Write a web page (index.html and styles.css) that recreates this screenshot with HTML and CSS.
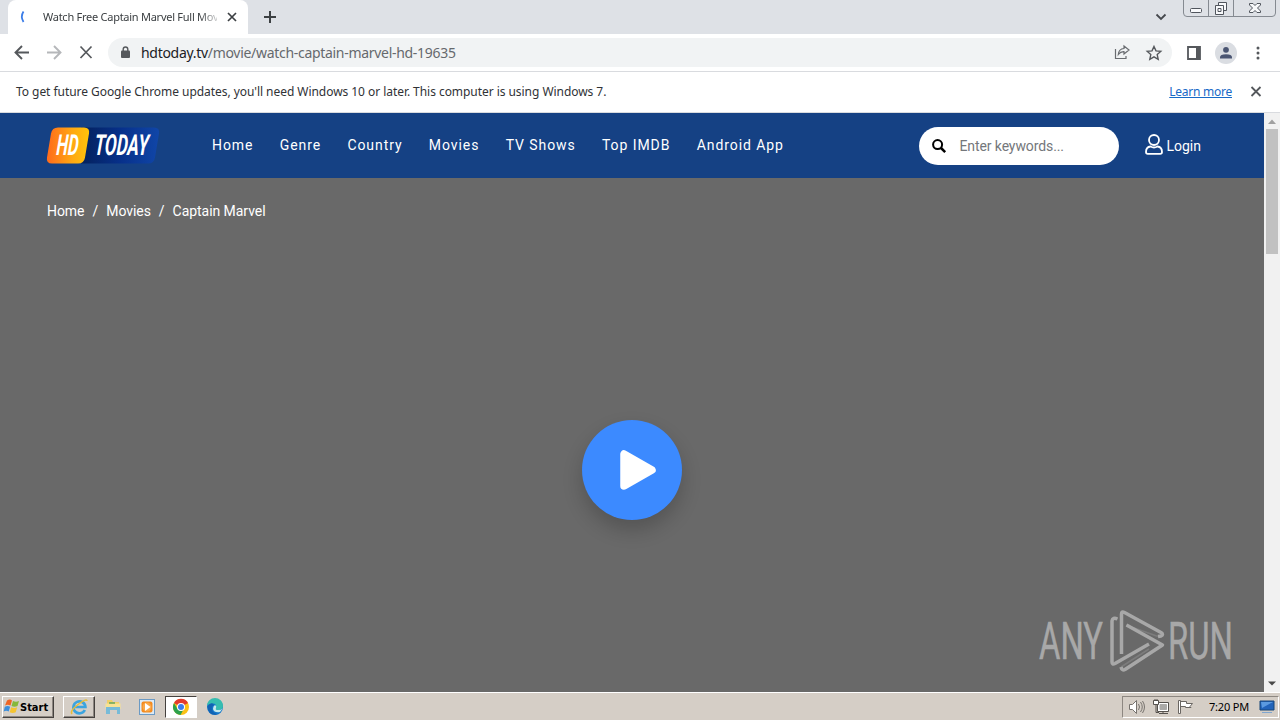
FILE: index.html
```html
<!DOCTYPE html>
<html lang="en">

<head>
    <meta charset="UTF-8">
    <meta name="viewport" content="width=device-width, initial-scale=1.0">
    <title>Watch Free Captain Marvel Full Movie</title>
    <link rel="stylesheet" href="styles.css">
</head>

<body>
    <!-- Tab strip -->
    <div class="tab-strip">
        <div class="tab-left"></div>
        <div class="tab">
            <svg class="spinner" width="16" height="16" viewBox="0 0 16 16"><path d="M3.5 2.5Q.2 7.500 3.500 13" fill="none" stroke="#3b7de8" stroke-width="1.800" /></svg>
            <span class="tab-title">Watch Free Captain Marvel Full Mov</span>
            <svg width="10" height="10" viewBox="0 0 10 10"><path d="M1 1l8 8M9 1L1 9" stroke="#3c4043" stroke-width="1.700" /></svg>
        </div>
        <svg class="new-tab" width="14" height="14" viewBox="0 0 14 14"><path d="M7 1v12M1 7h12" stroke="#3c4043" stroke-width="2" /></svg>
        <svg class="tab-search" width="12" height="8" viewBox="0 0 12 8"><path d="M1.500 1.500L6 6l4.500-4.500" fill="none" stroke="#45484d" stroke-width="1.800" /></svg>
        <svg class="window-controls" width="94" height="18" viewBox="0 0 94 18">
            <path d="M.5 0v13q0 3.500 3.500 3.500h85q3.500 0 3.500-3.500V0M25.500 0v16.500M50.500 0v16.500" fill="none" stroke="#858a91" />
            <g fill="#f8f9fb" stroke="#50555d">
                <rect x="7.500" y="8.500" width="11" height="4" rx="1" />
                <path d="M35.500 2.500h8v8h-8z" />
                <path d="M32.500 5.500h8v9h-8z" />
                <path d="M35 8.500h3v3h-3z" />
                <path d="M66.500 3.500h3.500l2 2 2-2h3.500v1.500l-3 3 3 3v1.500H74l-2-2-2 2h-3.500V11l3-3-3-3z" />
            </g>
        </svg>
    </div>

    <!-- Address bar -->
    <div class="toolbar">
        <svg width="16" height="16" viewBox="0 0 16 16"><path d="M15 7.500H2M8 1L1.500 7.500 8 14" fill="none" stroke="#55585c" stroke-width="1.900" /></svg>
        <svg width="16" height="16" viewBox="0 0 16 16"><path d="M1 7.500h13M8 1l6.500 6.500L8 14" fill="none" stroke="#b5b7ba" stroke-width="1.900" /></svg>
        <svg width="16" height="16" viewBox="0 0 16 16"><path d="M2.500 1.500l11 11.500M13.500 1.500L2.500 13" stroke="#55585c" stroke-width="1.700" /></svg>
        <div class="address">
            <svg width="10" height="13" viewBox="0 0 10 13"><rect x="0" y="4.500" width="9" height="7.500" rx="1" fill="#55585c" /><path d="M2.200 5V3.300a2.300 2.300 0 0 1 4.600 0V5" fill="none" stroke="#55585c" stroke-width="1.400" /></svg>
            <span class="url"><b>hdtoday.tv</b>/movie/watch-captain-marvel-hd-19635</span>
            <svg class="share" width="16" height="15" viewBox="0 0 16 15"><path d="M1.500 4v9.500H12V11M10 1l5 4-5 4V6.700Q6.500 6.500 4.300 9.500 4.600 4 10 3.500z" fill="none" stroke="#696c70" stroke-width="1.200" /></svg>
            <svg width="16" height="16" viewBox="0 0 16 16"><path d="M8 1.500l2 4.400 4.800.5-3.600 3.200 1 4.700L8 11.900l-4.200 2.400 1-4.700L1.200 6.400 6 5.900z" fill="none" stroke="#55585c" stroke-width="1.400" /></svg>
        </div>
        <svg class="side-panel" width="14" height="14" viewBox="0 0 14 14"><path d="M1 1h12v12H1z" fill="none" stroke="#55585c" stroke-width="1.800" /><path d="M9 1h4v12H9z" fill="#55585c" /></svg>
        <svg class="profile" width="22" height="22" viewBox="0 0 22 22"><circle cx="11" cy="11" r="11" fill="#dadde2" /><circle cx="11" cy="7.800" r="2.900" fill="#4a5572" /><path d="M5 16.500v-1.300q0-3 6-3t6 3v1.300z" fill="#4a5572" /></svg>
        <svg class="dots" width="4" height="14" viewBox="0 0 4 14" fill="#55585c"><circle cx="2" cy="2" r="1.500" /><circle cx="2" cy="7" r="1.500" /><circle cx="2" cy="12" r="1.500" /></svg>
    </div>

    <div class="infobar">
        <span class="notice">To get future Google Chrome updates, you'll need Windows 10 or later. This computer is using Windows 7.</span>
        <a href="#">Learn more</a>
        <svg width="12" height="12" viewBox="0 0 12 12"><path d="M1.500 2l9 9M10.500 2l-9 9" stroke="#55585c" stroke-width="1.800" /></svg>
    </div>

    <!-- Website -->
    <div class="viewport">
        <div class="site">
            <header class="header">
                <svg class="logo" width="113" height="38" viewBox="0 0 113 38">
                    <defs>
                        <linearGradient id="orange"><stop offset="0" stop-color="#ff6a1c" /><stop offset=".6" stop-color="#ffa812" /><stop offset="1" stop-color="#ffc40a" /></linearGradient>
                        <linearGradient id="blue"><stop offset="0" stop-color="#04215c" /><stop offset=".5" stop-color="#07308a" /><stop offset="1" stop-color="#1046a8" /></linearGradient>
                    </defs>
                    <path d="M34 .5h73q6 0 5 6l-4 24q-1 6-7 6H34z" fill="url(#blue)" />
                    <path d="M11 .5h26q6 0 5 6l-4 24q-1 6-7 6H5q-6 0-5-6L4 6.500q1-6 7-6z" fill="url(#orange)" />
                    <text x="11" y="28.500" textLength="22" lengthAdjust="spacingAndGlyphs" transform="skewX(-4)">HD</text>
                    <text x="49" y="28.500" textLength="54" lengthAdjust="spacingAndGlyphs" transform="skewX(-4)">TODAY</text>
                </svg>
                <nav class="menu">
                    <a href="#">Home</a>
                    <a href="#">Genre</a>
                    <a href="#">Country</a>
                    <a href="#">Movies</a>
                    <a href="#">TV Shows</a>
                    <a href="#">Top IMDB</a>
                    <a href="#">Android App</a>
                </nav>
                <div class="search">
                    <svg width="14" height="14" viewBox="0 0 14 14"><circle cx="5.600" cy="5.600" r="4.500" fill="none" stroke="#000" stroke-width="2" /><path d="M9 9l4.200 4.200" stroke="#000" stroke-width="2.500" /></svg>
                    <span>Enter keywords...</span>
                </div>
                <a class="login" href="#">
                    <svg width="18" height="21" viewBox="0 0 18 21" fill="none" stroke="#fff" stroke-width="1.800"><circle cx="9" cy="6" r="5" /><path d="M5.500 12.500Q1 13 1 18q0 1.800 1.800 1.800h12.400Q17 19.800 17 18q0-5-4.500-5.500Q9 14.500 5.500 12.500z" /></svg>
                    <span>Login</span>
                </a>
            </header>
            <div class="breadcrumb">
                <a href="#">Home</a><span>/</span><a href="#">Movies</a><span>/</span><a href="#">Captain Marvel</a>
            </div>
            <div class="play">
                <svg width="36" height="41" viewBox="0 0 36 41"><path d="M4 4v32L32 20z" fill="#fff" stroke="#fff" stroke-width="7.500" stroke-linejoin="round" /></svg>
            </div>
            <svg class="watermark" width="200" height="66" viewBox="0 0 200 66">
                <text x="1" y="49" textLength="64" lengthAdjust="spacingAndGlyphs">ANY</text>
                <text x="130" y="49" textLength="65" lengthAdjust="spacingAndGlyphs">RUN</text>
                <g fill="none" stroke="#a8a8a8" stroke-width="3.500" stroke-linejoin="round">
                    <path d="M83.500 44V4q0-3 3-1.500L123 22.500q3 2 0 3.500l-3 .5" />
                    <path d="M79.500 9q-5-2-5.500 2v41q0 3 3 1.500L111 34" />
                    <path d="M88.500 15L124.500 35 87 59.500q-3 1.500-4-2.500" />
                    <path d="M88 15l32 11.500M83 57l28-18" stroke-width="1.500" opacity=".3" />
                </g>
            </svg>
        </div>
        <div class="scrollbar">
            <svg width="16" height="16" viewBox="0 0 16 16"><path d="M4 11l4-4.500 4 4.500z" fill="#a0a0a0" /></svg>
            <div class="thumb"></div>
            <svg class="down" width="16" height="16" viewBox="0 0 16 16"><path d="M4 5.500h8L8 9.500z" fill="#484848" /></svg>
        </div>
    </div>

    <!-- Windows taskbar -->
    <div class="taskbar">
        <div class="start">
            <svg width="16" height="16" viewBox="0 0 16 16"><path d="M3 1.500q3-2 5 0L6.500 6.500q-3-1.500-5.500 0z" fill="#ee6524" /><path d="M9 2q3 1.500 6 0l-1.500 5q-3 1.500-6 0z" fill="#86b83b" /><path d="M.8 7.700q3-1.500 5.300 0L4.700 12.500q-2.500-1.500-5 0z" fill="#3c8edb" /><path d="M7.200 8.300q3 1.500 6 0l-1.500 5q-3 1.500-6 0z" fill="#f5c431" /></svg>
            <span>Start</span>
        </div>
        <div class="task raised">
            <svg width="18" height="18" viewBox="0 0 18 18" fill="none"><path d="M14.800 12a6 6 0 1 1 .6-3H4.500" stroke="#3ba4df" stroke-width="2.700" /><path d="M2 16Q-.5 13 8 6.500T17 3" stroke="#e8bd39" stroke-width="1.500" /></svg>
        </div>
        <div class="task">
            <svg width="18" height="18" viewBox="0 0 18 18"><path d="M3 2h5l1 2h6v6H3z" fill="#f0cf68" /><path d="M1.500 5.500h15V11h-15z" fill="#f7e294" /><path d="M2 9h14v7h-3v-4H6v4H2z" fill="#77bbd8" /><path d="M5 5h6" stroke="#66a75f" stroke-width="1.500" /></svg>
        </div>
        <div class="task">
            <svg width="18" height="18" viewBox="0 0 18 18"><rect x="1.500" y="1.500" width="15" height="15" fill="#dceaf5" stroke="#6b9ac4" /><rect x="3.500" y="3.500" width="11" height="11" rx="2" fill="#f48b20" /><circle cx="9" cy="9" r="4.500" fill="#f9a849" /><path d="M7 5v8L12.500 9z" fill="#fff" /></svg>
        </div>
        <div class="task pressed">
            <svg width="18" height="18" viewBox="0 0 18 18"><circle cx="9" cy="9" r="8" fill="#fbc116" /><path d="M9 9L2 5a8 8 0 0 1 14 0z" fill="#e33b2e" /><path d="M2 5a8 8 0 0 0 6.500 12L12 10.500 9 13 5.500 11z" fill="#2da14c" /><circle cx="9" cy="9" r="4" fill="#fff" /><circle cx="9" cy="9" r="3" fill="#3b7ded" /></svg>
        </div>
        <div class="task">
            <svg width="18" height="18" viewBox="0 0 18 18"><circle cx="9" cy="9" r="8" fill="#1476c9" /><path d="M1 8a8 8 0 0 1 16 0q0 4-5 4-3 0-2-2 1-5-4-4.500Q2 6 1 8z" fill="#36bdb0" /><path d="M10 10q-1 2 2 2 3 0 4.700-1.500L14 14q-6 1-7-3 0-3 2-4 2 1 1 3z" fill="#c5e9ed" /><path d="M1.500 8Q6 3 8 7q-4 2-1 7l4 2.500Q2 18 1.500 8z" fill="#1263b3" /></svg>
        </div>
        <div class="tray">
            <svg width="18" height="16" viewBox="0 0 18 16" fill="none" stroke="#77736e"><path d="M1.500 5.500h3l4-4v13l-4-4h-3z" fill="#fff" /><path d="M10.500 5q2 3 0 6M12.500 3q3.500 5 0 10M14.500 2q4 6 0 12" /></svg>
            <svg width="18" height="16" viewBox="0 0 18 16" stroke="#55514d"><path d="M5.500 3.500h11v9h-11z" fill="#fff" /><path d="M8 5.500h6.500v5H8z" fill="#aaa9a7" stroke="#aaa9a7" /><path d="M1.500 1.500h5v4h-5z" fill="#fff" /><path d="M3 0v2M5 0v2M4 5.500v8h3M7 14.500h9M11 12v2" fill="none" /></svg>
            <svg width="18" height="16" viewBox="0 0 18 16" stroke="#6a6662"><path d="M2.500 14.500v-13h2v13zM4.500 2.500h6v2h6L14 7.500l1 1H9.500v-1h-5z" fill="#fff" /></svg>
            <span class="clock">7:20 PM</span>
            <svg class="desktop" width="16" height="14" viewBox="0 0 16 14"><path d="M1 1h14v9H1z" fill="#2264ba" stroke="#174678" /><path d="M2 2h12L3 8z" fill="#5b9be0" /><path d="M3 12.500h10" stroke="#80a6cf" /></svg>
        </div>
    </div>
</body>

</html>
```
FILE: styles.css
```css
* {
    margin: 0;
    padding: 0;
    box-sizing: border-box;
}

body {
    display: flex;
    flex-direction: column;
    height: 100vh;
    overflow: hidden;
    font-family: "Noto Sans", sans-serif;
    background: #fff;
}

svg {
    display: block;
    flex-shrink: 0;
    overflow: visible;
}

a {
    color: inherit;
    text-decoration: none;
}

/* Browser window */
.tab-strip {
    display: flex;
    height: 34px;
    background: #dee1e6;
}

.tab-left {
    width: 8px;
}

.tab {
    display: flex;
    align-items: center;
    width: 240px;
    padding: 0 10px 0 13px;
    background: #fff;
    border-radius: 8px 8px 0 0;
}

.tab-title {
    width: 174px;
    margin: -2px 10px 0 7px;
    white-space: nowrap;
    font-size: 11px;
    letter-spacing: -0.26px;
    color: #3c4043;
    mask-image: linear-gradient(90deg, #000 90%, transparent 103%);
}

.spinner {
    margin-left: -1px;
}

.new-tab {
    margin: 10px 0 0 15px;
}

.tab-search {
    margin: 13px 16px 0 auto;
}

.window-controls {
    margin-right: 3px;
}

.toolbar {
    display: flex;
    align-items: center;
    gap: 16px;
    height: 38px;
    padding: 0 20px 0 14px;
    border-bottom: 1px solid #d9dbdf;
}

.address {
    display: flex;
    align-items: center;
    width: 1064px;
    height: 29px;
    margin-left: -2px;
    padding: 0 10px 0 13px;
    background: #f1f3f4;
    border-radius: 15px;
}

.url {
    margin-left: 10px;
    font-size: 14px;
    letter-spacing: -0.3px;
    color: #66696d;
}

.url b {
    font-weight: 400;
    color: #202124;
}

.share {
    margin: 0 16px 0 auto;
}

.side-panel {
    margin-left: -1px;
}

.profile {
    margin-left: -2px;
}

.dots {
    margin-left: 3px;
    margin-right: -3px;
}

.infobar {
    display: flex;
    align-items: center;
    height: 41px;
    padding: 0 18px 2px 16px;
    border-bottom: 1px solid #d9dbdf;
    font-size: 12px;
    letter-spacing: -0.05px;
    color: #303236;
}

.infobar a {
    margin: 0 18px 0 auto;
    letter-spacing: -0.25px;
    color: #1769c7;
    text-decoration: underline;
}

/* Website */
.viewport {
    display: flex;
    height: 579px;
}

.site {
    position: relative;
    width: 1264px;
    background: #696969;
    font-family: Roboto, sans-serif;
    font-size: 14px;
    color: #fff;
}

.header {
    display: flex;
    align-items: center;
    height: 65px;
    padding: 0 63px 0 47px;
    background: #154184;
}

.logo text {
    font-family: Roboto, sans-serif;
    font-size: 29px;
    font-weight: 700;
    font-style: italic;
    fill: #fff;
}

.menu {
    display: flex;
    gap: 26.3px;
    margin: -2px 0 0 52px;
    letter-spacing: 0.93px;
}

.search {
    display: flex;
    align-items: center;
    gap: 13px;
    width: 200px;
    height: 38px;
    margin: 1px 26px 0 auto;
    padding-left: 13px;
    background: #fff;
    border-radius: 19px;
    letter-spacing: -0.1px;
    color: #74777b;
}

.login {
    display: flex;
    align-items: center;
    gap: 3px;
}

.login svg {
    margin-top: -3px;
}

.breadcrumb {
    display: flex;
    gap: 8px;
    padding: 25px 47px;
    letter-spacing: -0.05px;
}

.play {
    position: absolute;
    top: 307px;
    left: 582px;
    display: flex;
    align-items: center;
    width: 100px;
    height: 100px;
    padding-left: 37.5px;
    background: #3c8aff;
    border-radius: 50%;
    box-shadow: 0 10px 20px rgba(0, 0, 0, 0.2);
}

.watermark {
    position: absolute;
    top: 497px;
    left: 1038px;
}

.watermark text {
    font-family: Roboto, sans-serif;
    font-size: 52px;
    font-weight: 400;
    fill: #a8a8a8;
    stroke: #a8a8a8;
    stroke-width: 0.5px;
}

.scrollbar {
    display: flex;
    flex-direction: column;
    width: 16px;
    background: #f1f1f1;
}

.thumb {
    width: 12px;
    height: 125px;
    margin: 0 2px;
    background: #c1c1c1;
}

.down {
    margin-top: auto;
}

/* Taskbar */
.taskbar {
    display: flex;
    align-items: center;
    height: 28px;
    padding: 1px 1px 0 2px;
    background: #d5cec6;
    border-top: 1px solid #fff;
}

.start,
.task {
    display: flex;
    align-items: center;
    height: 22px;
    border: 1px solid transparent;
}

.start {
    width: 52px;
    margin-right: 9px;
    padding-left: 1px;
    font-family: "DejaVu Sans Condensed", sans-serif;
    font-size: 11px;
    font-weight: 700;
    color: #000;
}

.task {
    justify-content: center;
    width: 32px;
    margin-right: 2px;
}

.start,
.raised {
    border-color: #fff #45413e #45413e #fff;
    box-shadow: inset -1px -1px #8d8781;
}

.pressed {
    background: #fff;
    border-color: #45413e #fff #fff #45413e;
}

.tray {
    display: flex;
    align-items: center;
    width: 157px;
    height: 22px;
    margin-left: auto;
    padding-left: 5px;
    border: 1px solid;
    border-color: #8d8781 #fff #fff #8d8781;
    gap: 6px;
}

.clock {
    margin: -2px 0 0 9px;
    font-size: 11px;
    letter-spacing: -0.2px;
    color: #000;
}

.desktop {
    margin-left: 4px;
}
```
